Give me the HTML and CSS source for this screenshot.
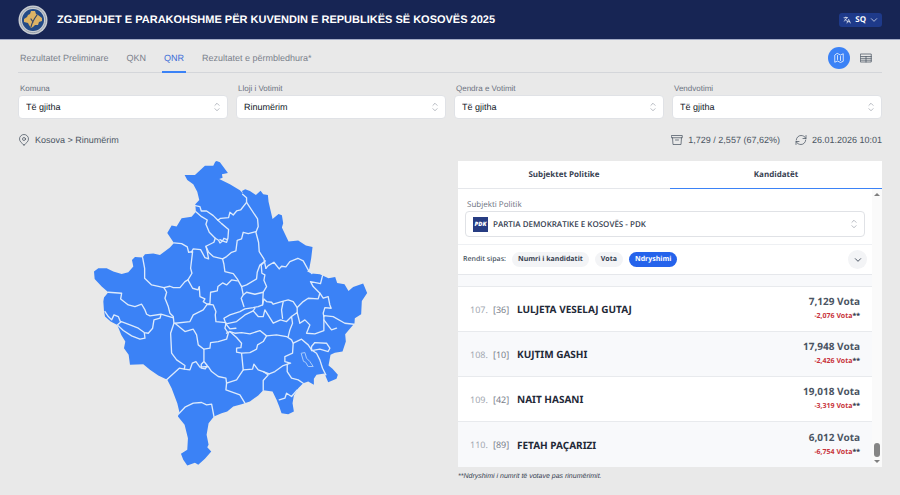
FILE: index.html
```html
<!DOCTYPE html>
<html lang="sq">
<head>
    <meta charset="UTF-8">
    <meta name="viewport" content="width=device-width, initial-scale=1.0">
    <title>Zgjedhjet e parakohshme 2025</title>
    <link rel="stylesheet" href="styles.css">
</head>
<body>
    <header class="topbar">
        <svg class="emblem" viewBox="0 0 30 30" aria-hidden="true">
            <circle cx="15" cy="15" r="14.5" fill="#c9cdd2"/>
            <circle cx="15" cy="15" r="12.6" fill="none" stroke="#8f98a5" stroke-width="1" stroke-dasharray="1 1"/>
            <circle cx="15" cy="15" r="11" fill="#234a86"/>
            <path d="M13 6l4 0 1 3 2 1 4 3 0 3-3 1-1 3-3 0-2 2-2 1-2-3-1-2-4-1 0-3 3-2 1-2 2-1z" fill="#dcb365"/>
            <path d="M19 10c-3 4-5 7-6 12M13 14l2 3" fill="none" stroke="#31466b" stroke-width="1.2"/>
        </svg>
        <h1>ZGJEDHJET E PARAKOHSHME PËR KUVENDIN E REPUBLIKËS SË KOSOVËS 2025</h1>
        <button class="lang" type="button">
            <svg class="icon-s" viewBox="0 0 24 24" aria-hidden="true"><path d="M3 5h11M8.500 3v2M11.500 5c-1 5-4 8-8 10M6 9c1 3 3 5 6 6M12 21l5-11 5 11M14 17h6"/></svg>
            <span>SQ</span>
            <svg class="icon-s" viewBox="0 0 24 24" aria-hidden="true"><path d="M4 8l8 8 8-8"/></svg>
        </button>
    </header>

    <main class="container">
        <nav class="nav">
            <a href="#">Rezultatet Preliminare</a>
            <a href="#">QKN</a>
            <a href="#" class="active">QNR</a>
            <a href="#">Rezultatet e përmbledhura*</a>
            <div class="view-switch">
                <button class="round active" type="button" aria-label="Harta">
                    <svg class="icon" viewBox="0 0 24 24" aria-hidden="true"><path d="M9 7v8M15 9v8M3.500 7v13.500L9 18l6 3 5.500-2.500V3.500L15 6 9 3z"/></svg>
                </button>
                <button class="round" type="button" aria-label="Tabela">
                    <svg class="icon" viewBox="0 0 24 24" aria-hidden="true"><path d="M1.500 4h21v16h-21zM1.500 9h21M1.500 12.700h21M1.500 16.400h21M12 9v11"/></svg>
                </button>
            </div>
        </nav>

        <form class="filters">
            <div class="field">
                <label for="komuna">Komuna</label>
                <div class="select">
                    <select id="komuna"><option>Të gjitha</option></select>
                    <svg class="updown" viewBox="0 0 24 24" aria-hidden="true"><path d="M7 8l5-5 5 5M7 16l5 5 5-5"/></svg>
                </div>
            </div>
            <div class="field">
                <label for="lloji">Lloji i Votimit</label>
                <div class="select">
                    <select id="lloji"><option>Rinumërim</option></select>
                    <svg class="updown" viewBox="0 0 24 24" aria-hidden="true"><path d="M7 8l5-5 5 5M7 16l5 5 5-5"/></svg>
                </div>
            </div>
            <div class="field">
                <label for="qendra">Qendra e Votimit</label>
                <div class="select">
                    <select id="qendra"><option>Të gjitha</option></select>
                    <svg class="updown" viewBox="0 0 24 24" aria-hidden="true"><path d="M7 8l5-5 5 5M7 16l5 5 5-5"/></svg>
                </div>
            </div>
            <div class="field">
                <label for="vendvotimi">Vendvotimi</label>
                <div class="select">
                    <select id="vendvotimi"><option>Të gjitha</option></select>
                    <svg class="updown" viewBox="0 0 24 24" aria-hidden="true"><path d="M7 8l5-5 5 5M7 16l5 5 5-5"/></svg>
                </div>
            </div>
        </form>

        <div class="status">
            <div class="status-item">
                <svg class="icon" viewBox="0 0 24 24" aria-hidden="true"><circle cx="12" cy="10" r="3"/><path d="M12 22c-4-3-9-7-9-12a9 9 0 0 1 18 0c0 5-5 9-9 12z"/></svg>
                <span>Kosova &gt; Rinumërim</span>
            </div>
            <div class="status-item push">
                <svg class="icon" viewBox="0 0 24 24" aria-hidden="true"><path d="M1.500 3h21v4.500h-21zM3 7.500L4 21h16l1-13.500M9 12h6"/></svg>
                <span>1,729 / 2,557 (67,62%)</span>
            </div>
            <div class="status-item">
                <svg class="icon" viewBox="0 0 24 24" aria-hidden="true"><path d="M22 3v6h-6M2 21v-6h6M22 9C20 5 16 3 12 3 7 3 3 7 2.500 12M2 15c2 4 6 6 10 6 5 0 9-4 9.500-9"/></svg>
                <span>26.01.2026 10:01</span>
            </div>
        </div>

        <div class="content">
            <section class="map">
                <svg viewBox="0 0 840 945" role="img" aria-label="Harta e Kosovës">
                    <path class="land" d="M380 18L390 22 414 54 396 58 398 68 388 72 420 88 450 106 460 116 456 108 466 103 480 108 498 120 512 107 520 118 534 120 536 140 548 192 566 177 576 181 580 205 576 218 596 260 625 257 648 272 668 276 664 310 658 342 652 350 666 356 690 358 698 362 716 370 736 366 742 384 764 388 776 408 790 396 820 386 832 414 816 438 814 478 795 490 794 505 766 538 768 560 758 590 735 594 722 600 716 632 728 642 744 660 740 672 715 682 704 656 680 660 672 672 672 690 655 680 640 685 625 700 612 722 608 745 612 770 595 778 575 775 568 755 560 735 548 710 520 706 505 722 480 740 455 748 430 755 412 770 395 775 372 785 356 805 350 840 356 870 352 877 364 890 345 912 325 930 315 924 292 932 280 915 273 897 292 885 294 850 284 810 264 785 268 770 262 745 245 700 232 675 205 662 180 645 160 628 120 630 116 600 102 580 106 560 94 540 82 510 62 500 45 485 42 468 40 440 42 428 55 412 35 395 14 372 12 350 25 340 50 340 70 350 95 357 115 352 130 335 126 315 135 306 158 308 165 298 190 296 210 300 240 278 252 264 232 234 245 212 260 215 275 190 305 185 318 170 316 148 328 135 322 110 310 88 292 75 284 60 315 60 345 32 370 32 376 20z"/>
                    <g class="borders">
                        <path d="M316 152L330 155 334 168 350 168 370 182 384 196 392 190 416 188 420 172 430 180 440 168 452 165 470 142"/>
                        <path d="M318 170L335 185 352 195 348 208 358 232 376 250 372 262 348 274 352 290 356 312 345 308 332 284 310 282 304 292"/>
                        <path d="M384 196L395 206 416 224 414 250 410 262 398 258 390 264 386 256 376 250M390 254L398 258 402 250 412 254"/>
                        <path d="M348 274L356 292 370 305 398 312 410 305 425 292 438 288 442 256 455 252 460 232 475 236 498 230"/>
                        <path d="M458 118L470 128 470 142 503 192 505 215 498 232 506 262 508 290 522 312 528 340"/>
                        <path d="M528 340L535 332 552 322 568 342 575 334 588 336 600 320 624 310 640 318 655 345 666 356"/>
                        <path d="M252 264L275 266 292 276 296 292 308 290 302 340 306 355 294 375"/>
                        <path d="M158 308L164 340 164 370 185 390 222 398 240 394 250 398 270 398 285 380 294 375"/>
                        <path d="M294 375L308 400 324 405 328 395 330 425 345 432 340 440 352 448 360 446 362 412 382 408 384 395 398 384 410 390 425 375 442 378"/>
                        <path d="M398 312L402 328 405 350 430 356 442 372 455 395 470 390 500 372 502 352 510 330 526 318M526 318L514 330 516 355 525 360 522 376 530 395 520 412"/>
                        <path d="M455 395L460 420 454 430 462 455M460 420L470 412 495 418 520 412 518 450"/>
                        <path d="M408 507L402 490 420 480 450 470 465 462 490 458 505 455 518 450 522 432 530 440 545 442 550 448 575 440 595 435 610 440 622 458 640 440 655 430 685 432 690 415 670 395 662 380 692 386 698 362"/>
                        <path d="M690 415L700 430 715 425 720 450 724 460 705 458 700 475 702 485"/>
                        <path d="M222 398L230 412 225 430 235 455 240 475 250 485 252 505"/>
                        <path d="M55 412L95 415 92 432 115 450 135 455 155 448 165 465 170 478 180 483 213 478 248 488"/>
                        <path d="M213 480L210 490 192 495 188 520 175 535 163 533 165 550 150 553 125 543 100 527 82 510 94 500 120 510 145 520 163 533"/>
                        <path d="M45 470L55 485 65 495 72 480 85 485 92 502"/>
                        <path d="M252 505L242 535 245 595 260 615 285 632 283 643 268 640 230 675"/>
                        <path d="M255 505L285 530 310 523 320 540 325 570 342 583 360 580 362 563 385 560 410 553 415 535 405 520 408 507"/>
                        <path d="M255 505L300 500 310 480 340 465 352 448 370 450 378 470 376 480 378 500 408 503"/>
                        <path d="M342 583V620L334 628 334 640 346 642 352 632 342 620"/>
                        <path d="M283 643L300 645 307 625 318 620 330 637 355 635 365 650 385 665 408 670 410 685 408 705 450 720 465 745"/>
                        <path d="M265 778L285 757 310 745 335 743 350 750 365 748 372 785"/>
                        <path d="M410 685L440 675 460 645 488 643 492 628 505 645 520 650 538 657"/>
                        <path d="M410 535L420 530 435 535 455 533 480 537 510 527 530 543 560 540 590 545 605 555 610 565 608 595 585 605 585 620 602 625 580 632 555 650 538 657"/>
                        <path d="M420 530L440 548 455 565 453 578 440 580 440 592 455 595 480 593 500 583 503 570 520 560 530 543M455 595L460 645"/>
                        <path d="M520 650L535 660 520 677 520 706"/>
                        <path d="M592 628L592 650 605 670 625 675 640 685"/>
                        <path d="M568 735L585 730 590 715 605 725 622 705"/>
                        <path d="M610 565L635 553 655 570 665 585 680 595 690 615 698 640 708 660"/>
                        <path d="M665 575L675 563 710 565 720 580 715 590 690 583 665 587z"/>
                        <path class="thin" d="M635 595L645 593 650 610 660 620 670 635 655 635 647 622 642 620z"/>
                        <path d="M595 545L600 525 608 505 605 485 622 473 630 505 645 495 660 510 650 535 675 537 702 527 702 482 730 485 765 505 792 508"/>
                        <path d="M702 495L715 512 725 525 740 520"/>
                        <path d="M408 507L440 500 465 480 490 468 505 485 520 485 525 465 550 505 572 495 590 500 605 485"/>
                        <path d="M580 440L575 465 578 490M622 458V473"/>
                        <path d="M408 507L420 522 438 520M490 468L495 460"/>
                    </g>
                </svg>
            </section>

            <section class="results">
                <div class="panel">
                    <div class="tabs">
                        <button type="button">Subjektet Politike</button>
                        <button type="button" class="active">Kandidatët</button>
                    </div>
                    <div class="panel-body">
                        <div class="panel-main">
                            <div class="party">
                                <label for="subjekti">Subjekti Politik</label>
                                <div class="select">
                                    <span class="party-logo" aria-hidden="true">PDK</span>
                                    <select id="subjekti"><option>PARTIA DEMOKRATIKE E KOSOVËS - PDK</option></select>
                                    <svg class="updown" viewBox="0 0 24 24" aria-hidden="true"><path d="M7 8l5-5 5 5M7 16l5 5 5-5"/></svg>
                                </div>
                            </div>
                            <div class="sort">
                                <span>Rendit sipas:</span>
                                <button type="button" class="pill">Numri i kandidatit</button>
                                <button type="button" class="pill">Vota</button>
                                <button type="button" class="pill active">Ndryshimi</button>
                                <button type="button" class="expand" aria-label="Më shumë">
                                    <svg class="icon-s" viewBox="0 0 24 24" aria-hidden="true"><path d="M4 8l8 8 8-8"/></svg>
                                </button>
                            </div>
                            <ol class="list">
                                <li class="spacer"></li>
                                <li>
                                    <span class="rank">107.</span><span class="num">[36]</span>
                                    <span class="name">LULJETA VESELAJ GUTAJ</span>
                                    <div class="votes">7,129 Vota<small>-2,076 Vota<b>**</b></small></div>
                                </li>
                                <li>
                                    <span class="rank">108.</span><span class="num">[10]</span>
                                    <span class="name">KUJTIM GASHI</span>
                                    <div class="votes">17,948 Vota<small>-2,426 Vota<b>**</b></small></div>
                                </li>
                                <li>
                                    <span class="rank">109.</span><span class="num">[42]</span>
                                    <span class="name">NAIT HASANI</span>
                                    <div class="votes">19,018 Vota<small>-3,319 Vota<b>**</b></small></div>
                                </li>
                                <li>
                                    <span class="rank">110.</span><span class="num">[89]</span>
                                    <span class="name">FETAH PAÇARIZI</span>
                                    <div class="votes">6,012 Vota<small>-6,754 Vota<b>**</b></small></div>
                                </li>
                            </ol>
                        </div>
                        <div class="scrollbar" aria-hidden="true">
                            <i class="arrow-up"></i>
                            <i class="thumb"></i>
                            <i class="arrow-down"></i>
                        </div>
                    </div>
                </div>
                <p class="note">**Ndryshimi i numrit të votave pas rinumërimit.</p>
            </section>
        </div>
    </main>
</body>
</html>
```
FILE: styles.css
```css
* {
    box-sizing: border-box;
}

body {
    margin: 0;
    background-color: #e9e9e9;
    color: #4b5563;
    font-family: "Liberation Sans", Arial, sans-serif;
    font-size: 9px;
    text-rendering: geometricPrecision;
}

button,
select {
    font: inherit;
    color: inherit;
    text-rendering: inherit;
    border: none;
    margin: 0;
    padding: 0;
    background: none;
    cursor: pointer;
}

svg {
    display: block;
    fill: none;
    stroke: currentColor;
    stroke-width: 1.5;
    stroke-linecap: round;
    stroke-linejoin: round;
}

.icon {
    width: 12px;
    height: 12px;
    flex: none;
}

.icon-s {
    width: 8px;
    height: 8px;
    stroke-width: 2;
}

/* Header */
.topbar {
    display: flex;
    align-items: center;
    gap: 9px;
    height: 40px;
    padding: 0 18px;
    background-color: #172554;
    border-bottom: 1px solid #a3abc6;
    color: white;
}

.emblem {
    width: 30px;
    height: 30px;
    stroke: none;
}

.topbar h1 {
    flex: 1;
    margin: 0;
    font-size: 11px;
}

.lang {
    display: flex;
    align-items: center;
    gap: 4px;
    height: 14px;
    padding: 0 4px;
    border-radius: 3px;
    background-color: #1e3a8a;
    font-family: "Open Sans", sans-serif;
    font-size: 8px;
    font-weight: 700;
}

.container {
    padding: 0 18px;
}

/* Navigation */
.nav {
    display: flex;
    align-items: center;
    gap: 14px;
    height: 33px;
    border-bottom: 1px solid #d4d6da;
}

.nav a {
    height: 33px;
    padding: 0 2px;
    border-bottom: 2px solid transparent;
    color: #7b818c;
    line-height: 36px;
    text-decoration: none;
}

.nav a.active {
    border-color: #3b82f6;
    color: #3f6fd8;
}

.view-switch {
    display: flex;
    gap: 5px;
    margin-left: auto;
    padding: 4px 5px 0 0;
}

.round {
    display: grid;
    place-items: center;
    width: 22px;
    height: 22px;
    border-radius: 50%;
}

.round.active {
    background-color: #3b82f6;
    color: white;
}

/* Filters */
.filters {
    display: grid;
    grid-template-columns: repeat(4, 1fr);
    gap: 8px;
    padding-top: 10px;
}

.field label,
.party label {
    display: block;
    padding: 0 2px;
    color: #6b7280;
    font-size: 8px;
    line-height: 12px;
}

.select {
    position: relative;
}

.select select {
    display: block;
    appearance: none;
    width: 100%;
    height: 24px;
    padding: 0 7px;
    border: 1px solid #e0e2e6;
    border-radius: 4px;
    background-color: white;
    color: #111827;
}

.updown {
    position: absolute;
    top: 7px;
    right: 6px;
    width: 10px;
    height: 10px;
    color: #8b929d;
}

/* Status line */
.status {
    display: flex;
    gap: 15px;
    padding: 14px 0;
    line-height: 14px;
}

.status-item {
    display: flex;
    align-items: center;
    gap: 5px;
}

.status .push {
    margin-left: auto;
}

/* Content */
.content {
    display: grid;
    grid-template-columns: 1fr 1fr;
    gap: 16px;
}

.map svg {
    width: 66%;
    margin: -6px auto 0;
}

.land {
    fill: #3b82f6;
    stroke: none;
}

.borders {
    stroke: #dceafc;
    stroke-width: 4;
}

.borders .thin {
    stroke: #a9cbfb;
    stroke-width: 3;
}

.panel {
    background-color: white;
    font-family: "Open Sans", sans-serif;
}

.tabs {
    display: flex;
}

.tabs button {
    flex: 1;
    height: 28px;
    border-bottom: 1px solid #e5e7eb;
    color: #374151;
    font-size: 8px;
    font-weight: 700;
}

.tabs button.active {
    border-color: #3b82f6;
}

.panel-body {
    display: flex;
}

.panel-main {
    flex: 1;
}

.party {
    padding: 10px 7px 7px;
    border-bottom: 1px solid #eef0f3;
}

.party select {
    height: 26px;
    padding-left: 27px;
    color: #374151;
    font-size: 8px;
    font-weight: 600;
}

.party .updown {
    top: 8px;
}

.party-logo {
    position: absolute;
    top: 6px;
    left: 8px;
    width: 15px;
    height: 15px;
    background-color: #263c82;
    color: white;
    font-size: 6px;
    font-style: italic;
    font-weight: 800;
    line-height: 14px;
    text-align: center;
}

.sort {
    display: flex;
    align-items: center;
    gap: 6px;
    height: 30px;
    padding: 0 5px;
    border-bottom: 1px solid #e5e7eb;
    font-size: 7px;
    font-weight: 600;
}

.pill {
    height: 15px;
    padding: 0 6px;
    border-radius: 8px;
    background-color: #f3f4f6;
    color: #374151;
    font-weight: 700;
}

.pill.active {
    background-color: #2563eb;
    color: white;
}

.expand {
    display: grid;
    place-items: center;
    width: 19px;
    height: 19px;
    margin-left: auto;
    border-radius: 50%;
    background-color: #f3f4f6;
}

.expand svg {
    stroke-width: 3;
}

.list {
    margin: 0;
    padding: 0;
    list-style: none;
    font-family: "Noto Sans", sans-serif;
}

.list li {
    display: flex;
    align-items: center;
    height: 45px;
    padding: 0 12px;
    border-bottom: 1px solid #e8eaed;
}

.list li:nth-child(odd) {
    background-color: #f8f9fb;
}

.list li:last-child {
    border-bottom: none;
}

.list .spacer {
    height: 12px;
}

.rank {
    width: 23px;
    color: #a3a8b1;
}

.num {
    width: 24px;
    color: #7b818c;
}

.name {
    flex: 1;
    color: #1f2937;
    font-size: 10px;
    font-weight: 700;
}

.votes {
    color: #4b5563;
    font-size: 10px;
    font-weight: 700;
    line-height: 15px;
    text-align: right;
}

.votes small {
    display: block;
    color: #c9353c;
    font-size: 7px;
}

.votes b {
    color: #374151;
}

.scrollbar {
    display: flex;
    flex-direction: column;
    align-items: center;
    gap: 3px;
    width: 10px;
    padding: 4px 0;
    background-color: #fafafa;
}

.arrow-up,
.arrow-down {
    border: 3px solid transparent;
    border-top-width: 0;
    border-bottom: 3px solid #7f7f7f;
}

.arrow-down {
    border-top: 3px solid #7f7f7f;
    border-bottom-width: 0;
}

.thumb {
    width: 6px;
    height: 14px;
    margin-top: auto;
    border-radius: 3px;
    background-color: #858585;
}

.note {
    margin: 0;
    color: #374151;
    font-size: 7px;
    font-style: italic;
    line-height: 20px;
}
```
